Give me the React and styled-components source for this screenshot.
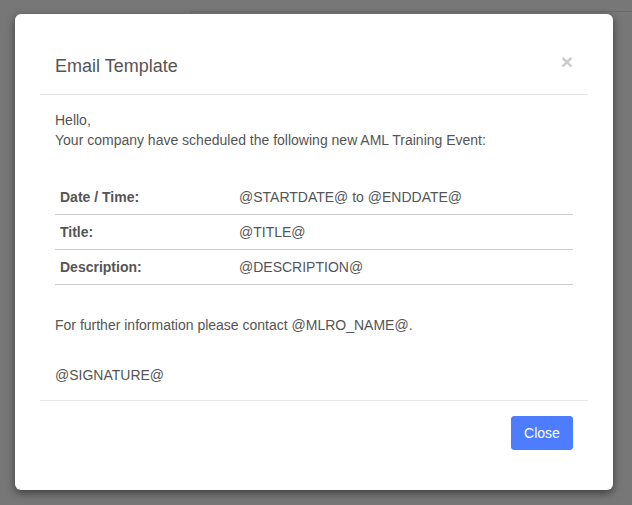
import React from "react";
import styled, { createGlobalStyle } from "styled-components";

const Global = createGlobalStyle`
  html, body { margin: 0; padding: 0; }
  body {
    width: 632px;
    height: 505px;
    overflow: hidden;
    background: #777777;
    font-family: "Liberation Sans", Arial, sans-serif;
  }
`;

const Page = styled.div`
  position: relative;
  display: flow-root;
  width: 632px;
  height: 505px;
`;

const BackPanel = styled.div`
  margin: 11px 0 0 190px;
  height: 400px;
  border-top: 1px solid #6c6c6c;
`;

const Overlay = styled.div`
  position: absolute;
  inset: 0;
  padding: 14px 0 0 15px;
`;

const Modal = styled.div`
  width: 598px;
  height: 476px;
  box-sizing: border-box;
  background: #fff;
  border-radius: 6px;
  box-shadow: 0 3px 9px rgba(0, 0, 0, 0.5);
  padding: 25px 25px;
  display: flex;
  flex-direction: column;
  color: #555;
`;

const Header = styled.div`
  display: flex;
  justify-content: space-between;
  align-items: flex-start;
  padding: 15px;
  border-bottom: 1px solid #e5e5e5;
`;

const Title = styled.h4`
  margin: 0;
  font-size: 18px;
  font-weight: normal;
  line-height: 25px;
  color: #555;
`;

const CloseX = styled.span`
  font-size: 21px;
  font-weight: bold;
  line-height: 1;
  color: #000;
  opacity: 0.2;
  margin-top: -3px;
`;

const Body = styled.div`
  padding: 15px;
  font-size: 14px;
  line-height: 20px;
`;

const Para = styled.p`
  margin: ${(p) => p.$mt || 0}px 0 0 0;
`;

const Table = styled.table`
  width: 100%;
  border-collapse: collapse;
  margin-top: 30px;
`;

const Row = styled.tr`
  border-bottom: 1px solid #ccc;
`;

const Label = styled.td`
  width: 169px;
  height: 34px;
  padding: 0 5px;
  font-weight: bold;
  vertical-align: middle;
`;

const Value = styled.td`
  padding: 0 5px;
  vertical-align: middle;
`;

const Footer = styled.div`
  border-top: 1px solid #e5e5e5;
  padding: 15px;
  display: flex;
  justify-content: flex-end;
`;

const Button = styled.button`
  font-family: inherit;
  font-size: 14px;
  line-height: 20px;
  padding: 6px 12px;
  width: 62px;
  color: #fff;
  background: #4d7cfe;
  border: 1px solid #4d7cfe;
  border-radius: 3px;
`;

const rows = [
  ["Date / Time:", "@STARTDATE@ to @ENDDATE@"],
  ["Title:", "@TITLE@"],
  ["Description:", "@DESCRIPTION@"],
];

export default function App() {
  return (
    <Page>
      <Global />
      <BackPanel />
      <Overlay>
        <Modal>
          <Header>
            <Title>Email Template</Title>
            <CloseX>×</CloseX>
          </Header>
          <Body>
            <Para>Hello,</Para>
            <Para>Your company have scheduled the following new AML Training Event:</Para>
            <Table>
              <tbody>
                {rows.map(([l, v]) => (
                  <Row key={l}>
                    <Label>{l}</Label>
                    <Value>{v}</Value>
                  </Row>
                ))}
              </tbody>
            </Table>
            <Para $mt={30}>For further information please contact @MLRO_NAME@.</Para>
            <Para $mt={30}>@SIGNATURE@</Para>
          </Body>
          <Footer>
            <Button>Close</Button>
          </Footer>
        </Modal>
      </Overlay>
    </Page>
  );
}
